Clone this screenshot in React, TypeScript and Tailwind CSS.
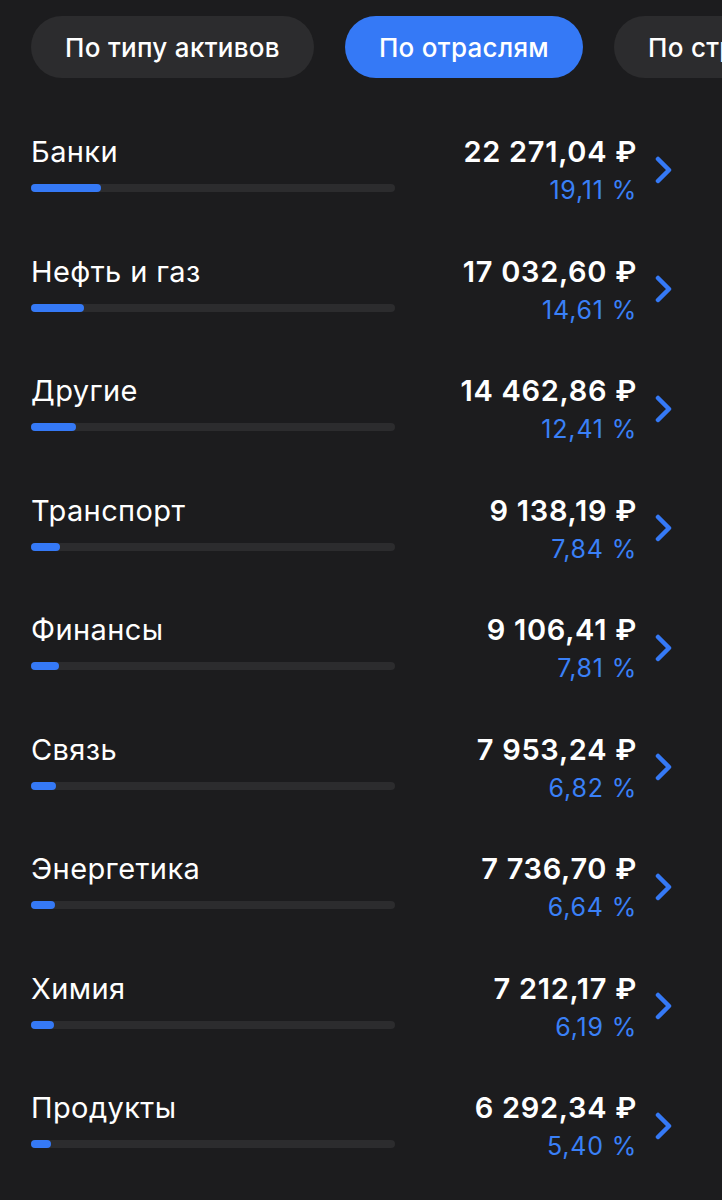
const tabs = [
  { label: "По типу активов", active: false },
  { label: "По отраслям", active: true },
  { label: "По странам", active: false },
];

const rows = [
  { name: "Банки", amount: "22 271,04 ₽", pct: 19.11 },
  { name: "Нефть и газ", amount: "17 032,60 ₽", pct: 14.61 },
  { name: "Другие", amount: "14 462,86 ₽", pct: 12.41 },
  { name: "Транспорт", amount: "9 138,19 ₽", pct: 7.84 },
  { name: "Финансы", amount: "9 106,41 ₽", pct: 7.81 },
  { name: "Связь", amount: "7 953,24 ₽", pct: 6.82 },
  { name: "Энергетика", amount: "7 736,70 ₽", pct: 6.64 },
  { name: "Химия", amount: "7 212,17 ₽", pct: 6.19 },
  { name: "Продукты", amount: "6 292,34 ₽", pct: 5.4 },
];

function Chevron() {
  return (
    <svg width="20" height="28" viewBox="0 0 20 28" fill="none">
      <polyline
        points="4,3 15,14 4,25"
        stroke="#3579f6"
        strokeWidth="4.5"
        strokeLinecap="round"
        strokeLinejoin="round"
      />
    </svg>
  );
}

function fmtPct(p: number) {
  return p.toFixed(2).replace(".", ",") + " %";
}

export default function App() {
  return (
    <div
      className="min-h-[1200px] w-[722px] overflow-hidden bg-[#1c1c1e] text-white"
      style={{ fontFamily: "Inter, 'Noto Sans', sans-serif" }}
    >
      <div className="flex gap-[31px] whitespace-nowrap pl-[31px] pt-[16px] pb-[40px]">
        {tabs.map((t) => (
          <div
            key={t.label}
            className={
              "flex h-[62px] shrink-0 items-center rounded-full px-[34px] text-[26px] font-medium tracking-[0.3px] " +
              (t.active ? "bg-[#3579f6]" : "bg-[#2c2c2e]")
            }
          >
            {t.label}
          </div>
        ))}
      </div>

      <div>
        {rows.map((r) => (
          <div key={r.name} className="flex h-[119.5px] items-start pl-[31px] pt-[16px]">
            <div className="w-[364px]">
              <div className="text-[29px] leading-[36px] tracking-[0.4px]">{r.name}</div>
              <div className="mt-[14px] h-[8px] w-full rounded-full bg-[#2c2c2e]">
                <div
                  className="h-full rounded-full bg-[#3579f6]"
                  style={{ width: `${r.pct}%` }}
                />
              </div>
            </div>
            <div className="flex-1 text-right">
              <div className="text-[29px] font-semibold leading-[36px] tracking-[0.7px]">
                {r.amount}
              </div>
              <div className="mt-[5px] text-[25px] leading-[30px] tracking-[0.8px] text-[#3a80f7]">
                {fmtPct(r.pct)}
              </div>
            </div>
            <div className="flex h-[71px] w-[85px] items-center pl-[17px]">
              <Chevron />
            </div>
          </div>
        ))}
      </div>
    </div>
  );
}
